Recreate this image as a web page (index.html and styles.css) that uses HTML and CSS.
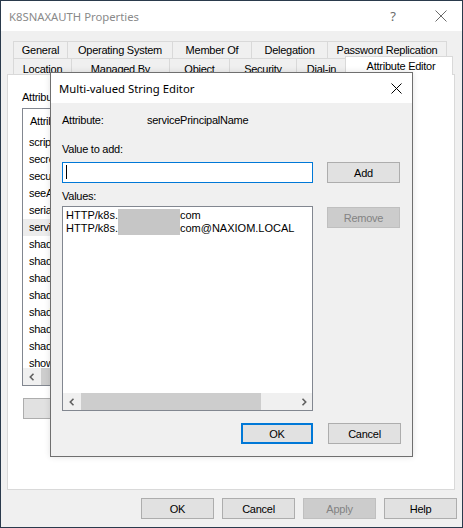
FILE: index.html
```html
<!DOCTYPE html>
<html>
<head>
<meta charset="utf-8">
<link rel="stylesheet" href="styles.css">
</head>
<body>
<div class="window">
  <div class="titlebar">
    <span class="title">K8SNAXAUTH Properties</span>
    <span class="tb-help">?</span>
    <span class="tb-close"><svg width="12" height="12" viewBox="0 0 12 12"><path d="M0.5 0.5 L11.5 11.5 M11.5 0.5 L0.5 11.5" stroke="#6a6a6a" stroke-width="1" fill="none"/></svg></span>
  </div>
  <div class="body">
    <div class="tabs">
      <div class="tabrow row1">
        <div class="tab first">General</div>
        <div class="tab">Operating System</div>
        <div class="tab">Member Of</div>
        <div class="tab">Delegation</div>
        <div class="tab">Password Replication</div>
      </div>
      <div class="tabrow row2">
        <div class="tab first">Location</div>
        <div class="tab">Managed By</div>
        <div class="tab">Object</div>
        <div class="tab">Security</div>
        <div class="tab">Dial-in</div>
        <div class="tab selected">Attribute Editor</div>
      </div>
    </div>
    <div class="panel">
      <div class="lbl">Attributes:</div>
      <div class="attrlist">
        <div class="attrhead">Attribute</div>
        <div class="attrrows">
          <div class="arow">scriptPath</div>
          <div class="arow">secretary</div>
          <div class="arow">securityIdentifier</div>
          <div class="arow">seeAlso</div>
          <div class="arow">serialNumber</div>
          <div class="arow sel">servicePrincipalName</div>
          <div class="arow">shadowExpire</div>
          <div class="arow">shadowFlag</div>
          <div class="arow">shadowInactive</div>
          <div class="arow">shadowLastChange</div>
          <div class="arow">shadowMax</div>
          <div class="arow">shadowMin</div>
          <div class="arow">shadowWarning</div>
          <div class="arow">showInAdvancedViewOnly</div>
        </div>
        <div class="hscroll">
          <span class="sarrow"><svg width="8" height="8" viewBox="0 0 8 8"><path d="M5.5 0.8 L2.3 4 L5.5 7.2" stroke="#606060" stroke-width="1.6" fill="none"/></svg></span>
          <span class="thumb thumb-left"></span>
        </div>
      </div>
      <div class="panel-btns"><button class="btn">Edit</button></div>
    </div>
    <div class="mainbtns">
      <button class="btn">OK</button>
      <button class="btn">Cancel</button>
      <button class="btn disabled">Apply</button>
      <button class="btn">Help</button>
    </div>
  </div>

  <div class="dialog">
    <div class="dlg-title">
      <span class="dlg-caption">Multi-valued String Editor</span>
      <span class="dlg-close"><svg width="11" height="11" viewBox="0 0 11 11"><path d="M0.5 0.5 L10.5 10.5 M10.5 0.5 L0.5 10.5" stroke="#000" stroke-width="1" fill="none"/></svg></span>
    </div>
    <div class="dlg-body">
      <div class="attr-row">
        <span class="attr-lbl">Attribute:</span>
        <span>servicePrincipalName</span>
      </div>
      <div class="lbl-add">Value to add:</div>
      <div class="grid-row add-row">
        <div class="input"><span class="caret"></span></div>
        <button class="btn">Add</button>
      </div>
      <div class="lbl-values">Values:</div>
      <div class="grid-row values-row">
        <div class="valuelist">
          <div class="vitems">
            <div class="vitem">HTTP/k8s.<span class="redact"></span>com</div>
            <div class="vitem">HTTP/k8s.<span class="redact"></span>com@NAXIOM.LOCAL</div>
          </div>
          <div class="hscroll">
            <span class="sarrow"><svg width="8" height="8" viewBox="0 0 8 8"><path d="M5.5 0.8 L2.3 4 L5.5 7.2" stroke="#606060" stroke-width="1.6" fill="none"/></svg></span>
            <span class="thumb thumb-vals"></span>
            <span class="track"></span>
            <span class="sarrow"><svg width="8" height="8" viewBox="0 0 8 8"><path d="M2.5 0.8 L5.7 4 L2.5 7.2" stroke="#606060" stroke-width="1.6" fill="none"/></svg></span>
          </div>
        </div>
        <button class="btn disabled">Remove</button>
      </div>
      <div class="dlg-buttons">
        <button class="btn default">OK</button>
        <button class="btn">Cancel</button>
      </div>
    </div>
  </div>
</div>
</body>
</html>
```

FILE: styles.css
```css
* { box-sizing: border-box; }

html, body {
  margin: 0;
  padding: 0;
  background: #2a3a4c;
}

.window {
  position: relative;
  width: 463px;
  height: 528px;
  border: 1px solid #2a3a4c;
  background: #f0f0f0;
  display: flex;
  flex-direction: column;
  font-family: "Liberation Sans", Arial, sans-serif;
  font-size: 11px;
  letter-spacing: -0.25px;
  color: #000;
  overflow: hidden;
}

/* ---------- title bar ---------- */
.titlebar {
  height: 30px;
  background: #fff;
  display: flex;
  align-items: center;
  padding-left: 8px;
  flex-shrink: 0;
}
.title {
  font-family: "Noto Sans", "Open Sans", sans-serif;
  font-size: 11.3px;
  letter-spacing: 0;
  color: #8a8a8a;
  flex: 1;
  padding-top: 1px;
}
.tb-help {
  font-family: "Noto Sans", sans-serif;
  font-size: 13px;
  letter-spacing: 0;
  color: #6a6a6a;
  width: 12px;
  margin-right: 36px;
  text-align: center;
}
.tb-close {
  display: flex;
  width: 12px;
  height: 12px;
  margin-right: 15px;
}

/* ---------- body ---------- */
.body {
  flex: 1;
  display: flex;
  flex-direction: column;
  padding: 10px 7px 8px 6px;
}

.tabs {
  display: flex;
  flex-direction: column;
  padding-left: 6px;
  height: 33px;
}
.tabrow {
  display: grid;
}
.row1 {
  grid-template-columns: 55px 105px 79px 76px 119px;
  grid-template-rows: 17px;
}
.row2 {
  grid-template-columns: 59px 98px 60px 67px 50px 104px;
  grid-template-rows: 16px;
}
.tab {
  border-top: 1px solid #d9d9d9;
  border-right: 1px solid #d9d9d9;
  background: #f0f0f0;
  text-align: center;
  line-height: 14px;
  white-space: nowrap;
  overflow: hidden;
}
.tab.first { border-left: 1px solid #d9d9d9; }
.row1 .tab { padding-top: 1px; }
.row2 .tab { padding-top: 3px; }
.tab.selected {
  position: relative;
  z-index: 2;
  height: 19px;
  margin: -2px -2px 0 -2px;
  background: #fff;
  border-left: 1px solid #d9d9d9;
  padding-top: 2px;
  padding-left: 4px;
}

.panel {
  position: relative;
  z-index: 1;
  height: 416px;
  background: #fff;
  border: 1px solid #d9d9d9;
  padding: 15px 0 0 14px;
  display: flex;
  flex-direction: column;
}
.lbl {
  line-height: 14px;
}
.attrlist {
  margin-top: 4px;
  width: 29px;
  height: 278px;
  border: 1px solid #828790;
  background: #fff;
  display: flex;
  flex-direction: column;
  overflow: hidden;
}
.attrhead {
  height: 25px;
  padding: 5px 0 0 7px;
  line-height: 14px;
  white-space: nowrap;
  overflow: hidden;
}
.attrrows {
  flex: 1;
  overflow: hidden;
}
.arow {
  height: 17px;
  line-height: 17px;
  padding-left: 6px;
  white-space: nowrap;
  overflow: hidden;
}
.arow.sel { background: #ececec; }

.hscroll {
  height: 17px;
  flex-shrink: 0;
  background: #f0f0f0;
  display: flex;
}
.sarrow {
  width: 17px;
  height: 17px;
  display: flex;
  align-items: center;
  justify-content: center;
  flex-shrink: 0;
}
.thumb {
  background: #cdcdcd;
  height: 17px;
}
.thumb-left { flex: 1; margin-left: 1px; }
.thumb-vals { width: 180px; margin-left: 1px; }
.track { flex: 1; }

.panel-btns {
  margin-top: 12px;
  padding-left: 1px;
}

.btn {
  width: 73px;
  height: 21px;
  padding: 0;
  margin: 0;
  background: #e1e1e1;
  border: 1px solid #adadad;
  font-family: "Liberation Sans", Arial, sans-serif;
  font-size: 11px;
  letter-spacing: -0.25px;
  color: #000;
  line-height: 18px;
}
.btn.disabled {
  background: #cccccc;
  border-color: #bfbfbf;
  color: #838383;
}
.btn.default {
  border: 2px solid #0078d7;
  width: 72px;
}

.mainbtns {
  margin-top: 8px;
  display: flex;
  justify-content: flex-end;
  gap: 8px;
  margin-right: -2px;
}

/* ---------- dialog ---------- */
.dialog {
  position: absolute;
  left: 49px;
  top: 71px;
  width: 363px;
  height: 385px;
  border: 1px solid #6f6f6f;
  background: #f0f0f0;
  z-index: 5;
  display: flex;
  flex-direction: column;
  box-shadow: 0 0 6px rgba(0,0,0,0.12);
}
.dlg-title {
  height: 30px;
  background: #fff;
  display: flex;
  align-items: center;
  padding-left: 8px;
  flex-shrink: 0;
}
.dlg-caption {
  font-family: "Noto Sans", "Open Sans", sans-serif;
  font-size: 11.3px;
  letter-spacing: 0;
  color: #000;
  flex: 1;
  padding-top: 1px;
}
.dlg-close {
  display: flex;
  width: 11px;
  height: 11px;
  margin-right: 10px;
}
.dlg-body {
  flex: 1;
  display: flex;
  flex-direction: column;
  padding: 10px 11px 12px 11px;
}
.attr-row {
  display: flex;
  line-height: 14px;
}
.attr-lbl { width: 85px; }
.lbl-add {
  margin-top: 15px;
  line-height: 14px;
}
.grid-row {
  display: grid;
  grid-template-columns: 251px 73px;
  column-gap: 14px;
  align-items: start;
}
.add-row { margin-top: 6px; }
.input {
  height: 21px;
  border: 1px solid #0078d7;
  background: #fff;
  padding: 2px 0 0 3px;
}
.caret {
  display: block;
  width: 1px;
  height: 14px;
  background: #000;
}
.lbl-values {
  margin-top: 6px;
  line-height: 14px;
}
.values-row { margin-top: 3px; }
.values-row .btn { margin-top: 1px; }
.valuelist {
  height: 205px;
  border: 1px solid #828790;
  background: #fff;
  display: flex;
  flex-direction: column;
}
.vitems {
  flex: 1;
  padding: 2px 0 0 3px;
}
.vitem {
  height: 13px;
  line-height: 13px;
  white-space: nowrap;
  letter-spacing: 0;
}
.redact {
  display: inline-block;
  width: 62px;
  height: 13px;
  background: #c6c6c6;
  vertical-align: top;
}
.dlg-buttons {
  margin-top: 12px;
  display: flex;
  justify-content: flex-end;
  gap: 15px;
}
```
